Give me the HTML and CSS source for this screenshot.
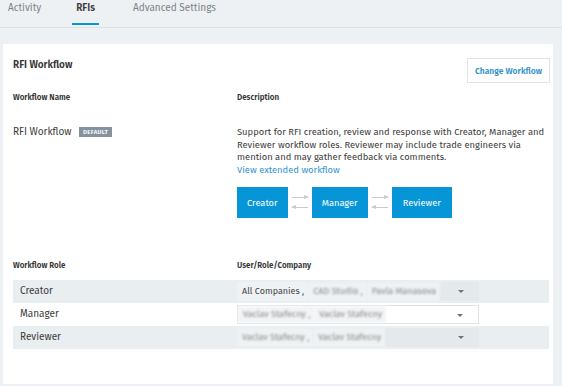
FILE: index.html
```html
<!DOCTYPE html>
<html lang="en">
<head>
    <meta charset="UTF-8">
    <title>RFI Settings</title>
    <link rel="stylesheet" href="styles.css">
</head>
<body>
    <div class="tabs">
        <div class="tab">Activity</div>
        <div class="tab active">RFIs</div>
        <div class="tab">Advanced Settings</div>
    </div>

    <div class="card">
        <div class="card-head">
            <h2>RFI Workflow</h2>
            <button class="change-btn">Change Workflow</button>
        </div>

        <div class="grid-row head-row">
            <div class="col-name">Workflow Name</div>
            <div class="col-desc">Description</div>
        </div>

        <div class="grid-row workflow-row">
            <div class="col-name">RFI Workflow <span class="badge">DEFAULT</span></div>
            <div class="col-desc">
                <p>Support for RFI creation, review and response with Creator, Manager and Reviewer workflow roles. Reviewer may include trade engineers via mention and may gather feedback via comments.</p>
                <a href="#" class="link">View extended workflow</a>
                <div class="flow">
                    <div class="flow-box">Creator</div>
                    <div class="arrows"><span class="arr right"></span><span class="arr left"></span></div>
                    <div class="flow-box">Manager</div>
                    <div class="arrows"><span class="arr right"></span><span class="arr left"></span></div>
                    <div class="flow-box">Reviewer</div>
                </div>
            </div>
        </div>

        <div class="grid-row head-row role-head">
            <div class="col-name">Workflow Role</div>
            <div class="col-desc">User/Role/Company</div>
        </div>

        <div class="role-row shaded">
            <div class="col-name">Creator</div>
            <div class="col-desc">
                <div class="select">
                    <span class="chip">All Companies ,</span>
                    <span class="chip blur">CAD Studio ,</span>
                    <span class="chip blur">Pavla Manasova</span>
                    <span class="caret"></span>
                </div>
            </div>
        </div>
        <div class="role-row">
            <div class="col-name">Manager</div>
            <div class="col-desc">
                <div class="select white">
                    <span class="chip blur">Vaclav Stafecny ,</span>
                    <span class="chip blur">Vaclav Stafecny</span>
                    <span class="caret"></span>
                </div>
            </div>
        </div>
        <div class="role-row shaded">
            <div class="col-name">Reviewer</div>
            <div class="col-desc">
                <div class="select">
                    <span class="chip blur">Vaclav Stafecny ,</span>
                    <span class="chip blur">Vaclav Stafecny</span>
                    <span class="caret"></span>
                </div>
            </div>
        </div>
    </div>
</body>
</html>
```

FILE: styles.css
```css
body {
    margin: 0;
    background-color: #eef1f3;
    font-family: "Fira Sans", "Noto Sans", Arial, sans-serif;
    color: #3c3c3c;
    font-size: 10px;
    overflow: hidden;
}

.tabs {
    display: flex;
    height: 28px;
    border-bottom: 1px solid #dde2e5;
    padding-left: 8px;
    box-sizing: border-box;
}

.tab {
    margin-right: 35px;
    padding-top: 2px;
    color: #7b8389;
    font-size: 10px;
    position: relative;
}

.tab.active {
    color: #3c3c3c;
    font-weight: 600;
    margin-right: 38px;
}

.tab.active::after {
    content: "";
    position: absolute;
    left: -4px;
    right: -4px;
    top: 23px;
    height: 2px;
    background-color: #0696d7;
}

.card {
    background-color: #ffffff;
    margin: 16px 9px 0 3px;
    height: 340px;
    padding: 14px 3px 0 10px;
    box-sizing: border-box;
}

.card-head {
    display: flex;
    justify-content: space-between;
    align-items: flex-start;
}

h2 {
    margin: 0;
    font-size: 10px;
    font-weight: 600;
    color: #333;
    line-height: 14px;
}

.change-btn {
    background-color: #ffffff;
    border: 1px solid #dfe4e7;
    color: #3592c6;
    font-family: inherit;
    font-weight: 600;
    font-size: 8.5px;
    width: 83px;
    height: 25px;
    padding: 0;
    white-space: nowrap;
}

.grid-row, .role-row {
    display: flex;
}

.col-name {
    width: 224px;
}

.col-desc {
    flex: 1;
}

.head-row {
    font-weight: 600;
    font-size: 8px;
    margin-top: 10px;
    color: #333;
}

.workflow-row {
    margin-top: 24px;
}

.workflow-row p {
    margin: 0 -4px 0 0;
    line-height: 12.5px;
    font-size: 9.4px;
}

.badge {
    display: inline-block;
    background-color: #86939e;
    color: #ffffff;
    font-size: 6px;
    font-weight: 600;
    letter-spacing: 0.3px;
    padding: 0 4px;
    line-height: 10px;
    margin-left: 5px;
    vertical-align: 1px;
}

.link {
    color: #2f96d0;
    text-decoration: none;
    display: block;
    line-height: 12px;
    font-size: 9.4px;
}

.flow {
    display: flex;
    align-items: center;
    margin-top: 11px;
}

.flow-box {
    background-color: #0696d7;
    color: #ffffff;
    height: 31px;
    line-height: 31px;
    padding: 0 10px;
    font-size: 9.3px;
    text-align: center;
}

.flow-box:last-child {
    padding: 0 11px;
}

.arrows {
    width: 24px;
    display: flex;
    flex-direction: column;
    align-items: center;
    gap: 9px;
}

.arr {
    display: block;
    width: 16px;
    height: 1px;
    background-color: #c4ccd2;
    position: relative;
}

.arr.right::after, .arr.left::after {
    content: "";
    position: absolute;
    top: -2px;
    border-top: 2.5px solid transparent;
    border-bottom: 2.5px solid transparent;
}

.arr.right::after {
    right: -1px;
    border-left: 5px solid #c4ccd2;
}

.arr.left::after {
    left: -1px;
    border-right: 5px solid #c4ccd2;
}

.role-head {
    margin-top: 43px;
    margin-bottom: 10px;
}

.role-row {
    height: 23px;
    align-items: center;
    margin-right: 1px;
}

.role-row .col-name {
    padding-left: 7px;
    width: 217px;
}

.shaded {
    background-color: #e9eef1;
}

.select {
    width: 242px;
    height: 19px;
    box-sizing: border-box;
    display: flex;
    align-items: center;
    position: relative;
    background-color: #e4e9ec;
    font-size: 9px;
}

.select.white {
    background-color: #ffffff;
    border: 1px solid #dfe4e7;
}

.chip {
    padding: 0 4px 0 5px;
    line-height: 19px;
    background-color: #eef2f4;
    color: #444;
}

.select.white .chip {
    background-color: #f2f4f6;
    line-height: 17px;
}

.chip.blur {
    filter: blur(1.3px);
    color: #888;
}

.caret {
    position: absolute;
    right: 15px;
    top: 8px;
    border-left: 3.5px solid transparent;
    border-right: 3.5px solid transparent;
    border-top: 3.5px solid #6b737a;
}
```
